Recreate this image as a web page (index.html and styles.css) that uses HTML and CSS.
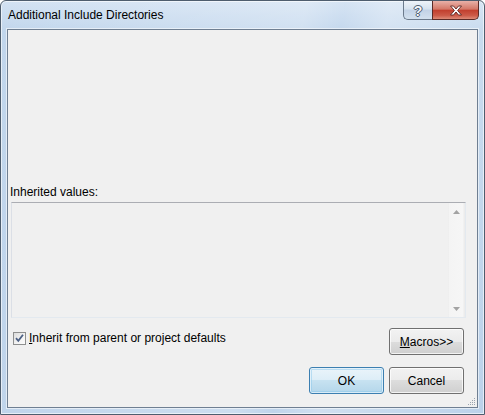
FILE: index.html
```html
<!DOCTYPE html>
<html>
<head>
<meta charset="utf-8">
<link rel="stylesheet" href="styles.css">
</head>
<body>
<div class="window">
  <div class="titlebar">
    <span class="title">Additional Include Directories</span>
    <div class="caption-btns">
      <div class="cap help">?</div>
      <div class="cap close">
        <svg width="14" height="11" viewBox="0 0 14 11"><path d="M1.5 1 L4.5 1 L7 4 L9.5 1 L12.5 1 L8.6 5.5 L12.5 10 L9.5 10 L7 7 L4.5 10 L1.5 10 L5.4 5.5 Z" fill="#fff" stroke="#5a2420" stroke-width="0.9" stroke-linejoin="round"/></svg>
      </div>
    </div>
  </div>
  <div class="client">
    <div class="lbl">Inherited values:</div>
    <div class="listbox">
      <div class="lb-content"></div>
      <div class="scrollbar">
        <div class="sb-arrow"><svg width="7" height="4" viewBox="0 0 7 4"><path d="M0 4 L3.5 0 L7 4 Z" fill="#a3a3a3"/></svg></div>
        <div class="sb-track"></div>
        <div class="sb-arrow"><svg width="7" height="4" viewBox="0 0 7 4"><path d="M0 0 L7 0 L3.5 4 Z" fill="#a3a3a3"/></svg></div>
      </div>
    </div>
    <div class="row-check">
      <div class="check">
        <span class="box"><svg width="11" height="11" viewBox="0 0 11 11"><path d="M2 5.2 L4.3 7.8 L9 1.8" fill="none" stroke="#4d6185" stroke-width="1.8"/></svg></span>
        <span class="check-text"><u>I</u>nherit from parent or project defaults</span>
      </div>
      <button class="btn"><u>M</u>acros&gt;&gt;</button>
    </div>
    <div class="row-buttons">
      <button class="btn default">OK</button>
      <button class="btn">Cancel</button>
    </div>
    <svg class="grip" width="8" height="8" viewBox="0 0 8 8">
      <rect x="6" y="0" width="1" height="1" fill="#9aa4b0"/>
      <rect x="4" y="2" width="1" height="1" fill="#9aa4b0"/>
      <rect x="6" y="2" width="1" height="1" fill="#9aa4b0"/>
      <rect x="2" y="4" width="1" height="1" fill="#9aa4b0"/>
      <rect x="4" y="4" width="1" height="1" fill="#9aa4b0"/>
      <rect x="6" y="4" width="1" height="1" fill="#9aa4b0"/>
      <rect x="0" y="6" width="1" height="1" fill="#9aa4b0"/>
      <rect x="2" y="6" width="1" height="1" fill="#9aa4b0"/>
      <rect x="4" y="6" width="1" height="1" fill="#9aa4b0"/>
      <rect x="6" y="6" width="1" height="1" fill="#9aa4b0"/>
    </svg>
  </div>
</div>
</body>
</html>
```
FILE: styles.css
```css
html, body {
  margin: 0;
  padding: 0;
  background: #fff;
}
body {
  font-family: "Liberation Sans", Arial, sans-serif;
  font-size: 12px;
  color: #000;
}
.window {
  width: 485px;
  height: 415px;
  box-sizing: border-box;
  border: 1px solid #4e5d6e;
  border-radius: 6px 6px 0 0;
  background:
    linear-gradient(100deg, rgba(255,255,255,0) 0%, rgba(255,255,255,0.25) 55%, rgba(255,255,255,0.05) 62%, rgba(255,255,255,0.3) 70%, rgba(255,255,255,0) 100%),
    linear-gradient(180deg, #d3e2f3 0%, #c1d6ec 30px, #bcd2ea 100%);
  box-shadow: inset 0 0 0 1px rgba(255,255,255,0.6);
  display: flex;
  flex-direction: column;
  overflow: hidden;
}
.titlebar {
  height: 28px;
  display: flex;
  justify-content: space-between;
  align-items: flex-start;
  flex: none;
}
.title {
  margin: 6px 0 0 7px;
  line-height: 16px;
  font-size: 12px;
  color: #000;
}
.caption-btns {
  display: flex;
  margin-right: 5px;
}
.cap {
  height: 19px;
  box-sizing: border-box;
  display: flex;
  align-items: center;
  justify-content: center;
}
.help {
  width: 29px;
  border: 1px solid #6b7a8c;
  border-top: none;
  border-right: none;
  border-radius: 0 0 0 5px;
  background: linear-gradient(180deg, #eef3f9 0%, #d6e2ef 45%, #c2d2e6 50%, #d3e1ef 100%);
  color: #f4f7fb;
  font-weight: bold;
  font-size: 14px;
  text-shadow: 0 0 1px #3d4a5c, 1px 0 0 #55657a, -1px 0 0 #55657a, 0 1px 0 #55657a, 0 -1px 0 #55657a;
  padding-top: 1px;
}
.close {
  width: 47px;
  border: 1px solid #5c2b27;
  border-top: none;
  border-radius: 0 0 5px 0;
  background: linear-gradient(180deg, #e8b1a8 0%, #d47868 45%, #c2402f 52%, #cc5a48 80%, #de8b78 100%);
}
.client {
  position: relative;
  flex: none;
  margin: 0 6px;
  height: 379px;
  box-sizing: border-box;
  border: 1px solid #6f7f92;
  box-shadow: 0 0 0 1px rgba(255,255,255,0.55);
  background: #f0f0f0;
  padding-top: 154px;
  display: flex;
  flex-direction: column;
}
.lbl {
  line-height: 16px;
  margin-left: 2px;
  height: 16px;
}
.listbox {
  margin: 2px 0 0 3px;
  width: 455px;
  height: 116px;
  box-sizing: border-box;
  border: 1px solid #dbdfe6;
  border-top-color: #abadb3;
  border-right-color: #e3e9ef;
  border-bottom-color: #e3e9ef;
  background: #f0f0f0;
  display: flex;
}
.lb-content {
  flex: 1;
}
.scrollbar {
  width: 17px;
  display: flex;
  flex-direction: column;
  background: linear-gradient(90deg, #e9e9e9 0px, #f4f4f4 1px, #f6f6f6 15px, #ececec 16px);
}
.sb-arrow {
  height: 17px;
  display: flex;
  align-items: center;
  justify-content: center;
}
.sb-track {
  flex: 1;
}
.row-check {
  margin-top: 10px;
  display: flex;
  justify-content: space-between;
  align-items: flex-start;
  padding-right: 13px;
}
.check {
  display: flex;
  align-items: flex-start;
  margin-top: 3px;
  margin-left: 5px;
}
.box {
  width: 13px;
  height: 13px;
  box-sizing: border-box;
  border: 1px solid #8e8f8f;
  background: linear-gradient(135deg, #dcdcdc 0%, #f4f4f4 60%, #fbfbfb 100%);
  display: flex;
  align-items: center;
  justify-content: center;
  margin-top: 1px;
}
.check-text {
  margin-left: 3px;
  line-height: 15px;
}
.btn {
  width: 75px;
  height: 27px;
  box-sizing: border-box;
  border: 1px solid #707070;
  border-radius: 3px;
  font-family: "Liberation Sans", Arial, sans-serif;
  font-size: 12px;
  color: #000;
  padding: 0;
  background: linear-gradient(180deg, #f2f2f2 0%, #ebebeb 50%, #dddddd 50%, #cfcfcf 100%);
  box-shadow: inset 0 0 0 1px rgba(255,255,255,0.75);
}
.btn.default {
  border-color: #3c7fb1;
  background: linear-gradient(180deg, #eaf4fa 0%, #dcedf7 50%, #c7e2f1 50%, #b4d6ea 100%);
  box-shadow: inset 0 0 0 1px rgba(255,255,255,0.6), inset 0 0 0 2px rgba(140,200,235,0.5);
}
.row-buttons {
  margin-top: 12px;
  display: flex;
  justify-content: flex-end;
  gap: 5px;
  padding-right: 13px;
}
.grip {
  position: absolute;
  right: 1px;
  bottom: 1px;
}
```
